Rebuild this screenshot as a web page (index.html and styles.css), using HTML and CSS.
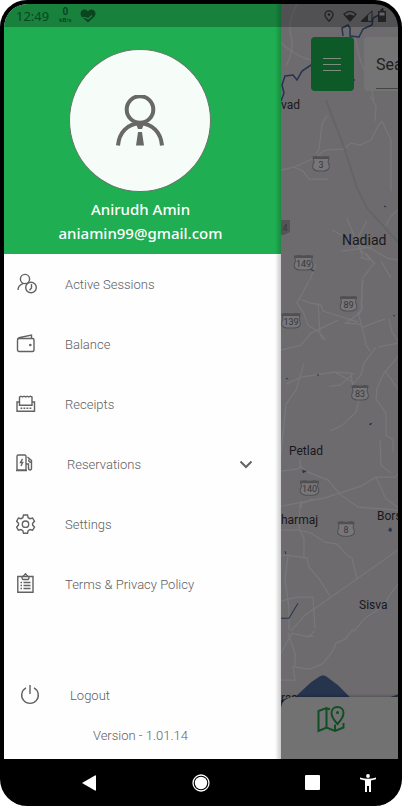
FILE: index.html
```html
<!DOCTYPE html>
<html lang="en">
<head>
<meta charset="utf-8">
<meta name="viewport" content="width=device-width, initial-scale=1">
<title>Account menu</title>
<link rel="stylesheet" href="styles.css">
</head>
<body>
<div class="phone">
  <div class="screen">
    <header class="status">
      <span class="time">12:49</span>
      <span class="speed"><b>0</b><small>kB/s</small></span>
      <svg class="heart" width="16" height="14" viewBox="0 0 16 14"><path d="M8 13.500 1.500 7.500C-1 4 1.500.5 4.500.5 6.200.5 7.400 1.300 8 2.500 8.600 1.300 9.800.5 11.500.5c3 0 5.500 3.500 3 7z" fill="currentColor"/><path d="M3 8.500h3l2 1.500 4-3.500" fill="none" stroke="#188440" stroke-width="1.200"/></svg>
      <span class="signals">
        <svg width="10" height="12" viewBox="0 0 10 12"><path d="M5 .8C2.700.8 1 2.400 1 4.600 1 7.200 5 11.200 5 11.200S9 7.200 9 4.600C9 2.400 7.300.8 5 .8z" fill="none" stroke="currentColor" stroke-width="1.300"/><circle cx="5" cy="4.600" r="1.300" fill="currentColor"/></svg>
        <svg class="wifi" width="14" height="12" viewBox="0 0 14 12"><path d="M1 4.200Q7-1.500 13 4.200L7 11z" fill="none" stroke="currentColor" stroke-width="1.200"/><path d="M3 6q4-3 8 0L7 11z" fill="currentColor"/></svg>
        <svg width="13" height="12" viewBox="0 0 13 12"><path d="M1 11.400H12V.9z" fill="none" stroke="currentColor"/><path d="M1 11.400H8V4.600z" fill="currentColor"/></svg>
        <svg class="battery" width="8" height="13" viewBox="0 0 8 13"><path d="M2.500 0h3v2H8v11H0V2h2.500z" fill="currentColor"/><path d="M1.500 3.500h5v3h-5z" fill="#656466"/></svg>
      </span>
    </header>

    <aside class="drawer">
      <div class="profile">
        <div class="avatar">
          <svg width="50" height="52" viewBox="0 0 50 52" fill="none" stroke="#686868" stroke-width="4"><circle cx="25" cy="14.500" r="13.300"/><path d="M3 50.500C4 38 12 28.500 25 28.500S46 38 47 50.500"/><path d="M21 29h8l-2 5h-4zM23 37h4l2 13.500h-8z" fill="#686868" stroke="none"/></svg>
        </div>
        <p>Anirudh Amin</p>
        <p>aniamin99@gmail.com</p>
      </div>
      <nav class="menu">
        <a href="#sessions"><svg width="22" height="22" viewBox="0 0 22 22"><circle cx="9" cy="6" r="4.600"/><path d="M2 17C2 13.500 4 11.600 7 10.600"/><circle cx="15" cy="14.500" r="5.300"/><path d="M15.500 11v4l-2 2.200"/></svg><span>Active Sessions</span></a>
        <a href="#balance"><svg width="22" height="22" viewBox="0 0 22 22"><rect x="1.500" y="5.500" width="16.500" height="13" rx="1.500"/><path d="M2 6.500Q1.500 5 4 4.500L15.500 2v3.500"/><circle cx="14.300" cy="12" r=".6"/></svg><span>Balance</span></a>
        <a href="#receipts"><svg width="22" height="22" viewBox="0 0 22 22"><path d="M4 9H1v9.300h17.500V9H16M3.500 3.500v8.700h12.500V3.500"/><path d="M3.500 4l1.500-.8 1.500.8L8 3.200l1.700.8 1.500-.8 1.500.8 1.500-.8 1.800.8"/><path d="M4.500 15.200H15.500" stroke-dasharray="1.800 1.200"/></svg><span>Receipts</span></a>
        <button type="button" aria-expanded="false"><svg width="22" height="22" viewBox="0 0 22 22"><path d="M1 3.300Q1 2 2.300 2h6.400Q10 2 10 3.300V17H1zM0 17.500H11M6.500 5.800 4.500 9.500h2.200L5 13M11.500 4l4 3.500V15q0 2-1.500 2t-1.500-2v-4H10.500M13 6.500q-1 2.500 2.500 3"/></svg><span class="label">Reservations</span><svg class="chevron" width="14" height="9" viewBox="0 0 14 9"><path d="M1.500 1.500 7 7l5.500-5.500"/></svg></button>
        <a href="#settings"><svg width="22" height="22" viewBox="0 0 22 22"><path d="M7.500 2h4l.7 2.700 1.800 1L16.600 5l1.900 3.300-1.900 2v1.800l1.900 2-1.900 3.200-2.600-.7-1.800 1-.7 2.600h-4l-.7-2.600-1.800-1-2.600.7L.6 14.100l1.900-2v-1.800l-1.900-2L2.400 5l2.600.7 1.800-1z"/><circle cx="9.500" cy="11.200" r="3.200"/></svg><span>Settings</span></a>
        <a href="#terms"><svg width="22" height="22" viewBox="0 0 22 22"><path d="M1.800 3.500H17v15.700H1.800z"/><path d="M6 3.500q0 3 1 3h5q1 0 1-3M7 3l1.200-.7L9.500.8l1.200 1.500L12 3"/><path d="M4.500 9.500H6m1.500 0H14.500M4.500 12.500H6m1.500 0H14.500M4.500 15.500H6m1.500 0H14.500"/></svg><span>Terms &amp; Privacy Policy</span></a>
      </nav>
      <div class="foot">
        <button type="button"><svg width="20" height="20" viewBox="0 0 20 20"><path d="M6 2.800a8.300 8.300 0 1 0 8 0M10 0v9"/></svg><span>Logout</span></button>
        <p>Version - 1.01.14</p>
      </div>
    </aside>

    <main class="map">
      <svg class="tiles" viewBox="281 4 117 755" preserveAspectRatio="xMinYMin slice" role="img" aria-label="Map of Nadiad, Petlad and Sisva">
        <g class="roads">
          <path d="M297 4Q287 24 291 36T286 66M355 36Q359 60 364 70T374 100M281 43Q300 60 318 61"/>
          <path d="M327 116l-5 8-3 25-3 5M281 170l13-3 21-9 10-8 18-1 8-6 9 2 11-5 7-14 4-5 9 19v51M375 121l1-15-6-10M294 167l9 4 6 8h19"/>
          <path d="M332 230l9 5 15 10 14 3 17 10 11 2M347 219l12 28 4 10M367 221l-14 26M341 251l30-4 10-10M360 249l14 14-12 16M386 225l5-9 8-7M363 280l-2 24 1 6-4 5M381 261l10 17M310 280l6-16M366 253l9 11M360 257l10 3"/>
          <path d="M309 281l-12 22 6 9 5 13 11 7 4 8M302 300l9 3 10 2 2 6 35 11M318 303l2 30 6 7M281 350l20-5 10-12 27-13M362 281v27l-4 6-12 9M358 312l7 27 1 6 4 6M344 323l18 1M363 327l10-4 12-4M389 319l3 13 7 10M378 347l20-4M376 347l-12 16-3 12-7 8-19-11M281 454l5-50 10-14 8-27M286 384l15-7 33-5 17 1 2 15M354 373l-14 12-11 1M399 355l-15 18-7 15-1 11 10 14 0 22 7 5 0 12M386 372l12 17M359 400l-3 12-15 14-11 5M281 506l43-8 37-12 15-9h19l8-8 12-17M376 477l10 22 13 9M380 440l1 25 10 8"/>
          <path d="M300 459v7l8 6 20 8 12 14 18 13 40 3M281 471l16-2 5-3M281 530l18 0 12 3 14 9 12 2 10 11 5 3 5 21M300 501l2 7M313 499l-13 5-1 25 5 9 0 19M281 555l6 0 20 3 2 9 11 13 10 16M288 556l-3 22 4 30 0 22M399 549l-71 50-23 16-14 16M281 601l15-4 17 0 2 31M398 584l-7 9-8 13-18 12-12 14"/>
          <path d="M281 653l11-20 17 4 5-6M288 633l7 20 0 14 15 2 12-5 10-12 4-9 9-4 8-10M293 666l2 14-14 0M304 636l10 0"/>
        </g>
        <path class="highway" d="M326 100l18 47 13 41 10 20 31 34"/>
        <path class="water" d="M281 101l3-8-2-8 3-9 8-1 4 5 5-9 9-6 12-5M354 81v-2M343 36l-1-8 6-3 2 3v8l9 1 4-8 9-4 1-7 6-3 4-7"/>
        <path class="lake" d="M295 697l16-15 9-6 3-1 3 1 12 9 12 12zM390 697l8-3v3zM281 700l9-3v12h-9z"/>
        <path class="pond" d="M302 470l5 1-4 2zM370 423l2 0-1 2-2 0zM390 527l2 2-1 3-3-2z"/>
        <path class="stream" d="M310 269l2 1 2 1M384 206l2 1M393 315l2 1M286 378l2 1M285 551l1 3M317 375l2 0M281 618h8l9-15"/>
        <g class="shields">
          <g transform="translate(321 164)"><path d="M-8-7h16l-1 5q4 8-4 9H-3q-8-1-4-9z"/><path class="cap" d="M-8-7l3-1 5 1 5-1 3 1v2H-8z"/><text y="4">3</text></g>
          <g transform="translate(303.500 263)"><path d="M-9-7H9l-1 5q4 8-4 9H-4q-8-1-4-9z"/><path class="cap" d="M-9-7l4-1 5 1 5-1 4 1v2H-9z"/><text y="4">149</text></g>
          <g transform="translate(348.500 304)"><path d="M-8-7h16l-1 5q4 8-4 9H-3q-8-1-4-9z"/><path class="cap" d="M-8-7l3-1 5 1 5-1 3 1v2H-8z"/><text y="4">89</text></g>
          <g transform="translate(291 321)"><path d="M-9-7H9l-1 5q4 8-4 9H-4q-8-1-4-9z"/><path class="cap" d="M-9-7l4-1 5 1 5-1 4 1v2H-9z"/><text y="4">139</text></g>
          <g transform="translate(360 393)"><path d="M-8-7h16l-1 5q4 8-4 9H-3q-8-1-4-9z"/><path class="cap" d="M-8-7l3-1 5 1 5-1 3 1v2H-8z"/><text y="4">83</text></g>
          <g transform="translate(309.500 488)"><path d="M-9-7H9l-1 5q4 8-4 9H-4q-8-1-4-9z"/><path class="cap" d="M-9-7l4-1 5 1 5-1 4 1v2H-9z"/><text y="4">140</text></g>
          <g transform="translate(346 529)"><path d="M-8-7h16l-1 5q4 8-4 9H-3q-8-1-4-9z"/><path class="cap" d="M-8-7l3-1 5 1 5-1 3 1v2H-8z"/><text y="4">8</text></g>
          <path class="tag" d="M281 220h9v12l-6 3h-3z"/><text x="285" y="231">4</text>
        </g>
        <g class="places">
          <text x="281" y="109">vad</text>
          <text class="city" x="342" y="245">Nadiad</text>
          <text x="289" y="455">Petlad</text>
          <text x="281" y="524">harmaj</text>
          <text x="377" y="520">Bors</text>
          <text x="359" y="609">Sisva</text>
          <text x="281" y="702">ras</text>
        </g>
      </svg>
      <div class="tools">
        <button type="button" class="burger" aria-label="Menu"><i></i><i></i><i></i></button>
        <label class="search"><input type="text" placeholder="Search" aria-label="Search"></label>
      </div>
      <div class="sheet">
        <button type="button" aria-label="Map view"><svg width="28" height="28" viewBox="0 0 28 28" fill="none" stroke="#104f25" stroke-width="2"><path d="M13 4.500 9.500 3 1.500 6V26L9.500 22.500 18 26 26.500 22.500V18M9.500 3V22.500M18 19.500V26"/><path d="M20.500 2C17 2 14.500 4.500 14.500 8 14.500 12.500 20.500 19 20.500 19S26.500 12.500 26.500 8C26.500 4.500 24 2 20.500 2z"/><circle cx="20.500" cy="7.500" r="1.500" fill="#104f25" stroke="none"/></svg></button>
      </div>
    </main>
  </div>

  <nav class="system">
    <div class="keys">
      <button type="button" aria-label="Back"><svg width="14" height="16" viewBox="0 0 14 16"><path d="M0 8 13 .5Q14 0 14 1V15q0 1-1 .5z" fill="#fff"/></svg></button>
      <button type="button" aria-label="Home"><svg width="18" height="18" viewBox="0 0 18 18"><circle cx="9" cy="9" r="8" fill="none" stroke="#fff" stroke-width="1.300"/><circle cx="9" cy="9" r="6.200" fill="#fff"/></svg></button>
      <button type="button" aria-label="Recent apps"><svg width="15" height="15" viewBox="0 0 15 15"><rect width="15" height="15" rx="1" fill="#fff"/></svg></button>
    </div>
    <button type="button" aria-label="Accessibility"><svg width="16" height="18" viewBox="0 0 16 18" fill="#fff"><circle cx="8" cy="2" r="1.900"/><path d="M0 3.500Q8 6 16 3.500V5.300L11 6.500V18H9V12H7v6H5V6.500L0 5.300z"/></svg></button>
  </nav>
</div>
</body>
</html>
```
FILE: styles.css
```css
* { box-sizing: border-box; }
body {
  margin: 0;
  background: #fff;
  font-family: Roboto, "Liberation Sans", sans-serif;
}
p { margin: 0; }
svg { display: block; flex: none; }
button {
  margin: 0;
  padding: 0;
  border: 0;
  background: none;
  font: inherit;
  color: inherit;
}
.phone {
  display: flex;
  flex-direction: column;
  min-height: 100vh;
  border: 4px solid #000;
  border-bottom: 0;
  border-radius: 27px;
  background: #000;
  overflow: hidden;
}
.screen {
  position: relative;
  display: flex;
  flex: 1;
  border-radius: 23px 23px 0 0;
  overflow: hidden;
}

.status {
  position: absolute;
  inset: 0 0 auto;
  z-index: 3;
  display: flex;
  align-items: center;
  height: 23px;
  padding: 0 12px;
  background: rgba(0, 0, 0, 0.25);
  color: #0b4520;
}
.time { font-size: 13px; font-family: "Noto Sans", sans-serif; line-height: 20px; }
.speed {
  display: flex;
  flex-direction: column;
  align-items: center;
  margin-left: 10px;
  line-height: 8px;
}
.speed b { font-size: 10px; }
.speed small { font-size: 6px; font-weight: 700; }
.heart { margin-left: 8px; }
.signals {
  display: flex;
  align-items: center;
  gap: 3px;
  margin-left: auto;
  color: #222123;
}
.wifi { margin-left: 6px; }
.battery { margin-left: 2px; }

.drawer {
  position: relative;
  z-index: 1;
  display: flex;
  flex: 0 0 70.3%;
  flex-direction: column;
  background: #fefefe;
  color: #606060;
  font-size: 13px;
  font-weight: 300;
}
.drawer::after {
  content: "";
  position: absolute;
  inset: 0 0 0 auto;
  width: 6px;
  background: linear-gradient(90deg, transparent, rgba(0, 0, 0, 0.2));
}
.profile {
  display: flex;
  flex-direction: column;
  align-items: center;
  padding: 45px 8px 9px 4px;
  background: #20ae52;
  color: #fff;
  font-family: "Noto Sans", sans-serif;
  font-size: 15px;
  font-weight: 500;
  line-height: 24px;
}
.avatar {
  display: grid;
  place-items: center;
  width: 142px;
  height: 143px;
  margin-bottom: 5px;
  border: 1px solid #617966;
  border-radius: 50%;
  background: #f6fdf8;
}
.menu a, .menu button, .foot button {
  display: flex;
  align-items: center;
  gap: 27px;
  width: 100%;
  height: 60px;
  padding: 0 28px 0 12px;
  color: inherit;
  text-align: left;
  text-decoration: none;
}
.menu svg, .foot svg {
  fill: none;
  stroke: #626262;
  stroke-width: 1.4;
}
.label { padding-left: 2px; }
.menu .chevron { margin-left: auto; stroke-width: 2; }
.foot { margin-top: auto; padding-bottom: 12px; }
.foot button { gap: 30px; padding-left: 16px; }
.foot p { padding-right: 4px; line-height: 22px; text-align: center; }

.map {
  position: relative;
  flex: 1;
  min-width: 0;
  background: #6d6b6e;
  overflow: hidden;
}
.tiles {
  position: absolute;
  inset: 0;
  width: 100%;
  height: 100%;
}
.roads { fill: none; stroke: #787779; stroke-width: 1.2; }
.highway { fill: none; stroke: #656466; stroke-width: 2; }
.water { fill: none; stroke: #26334f; stroke-width: 1.5; }
.lake { fill: #26344d; }
.pond { fill: #26344d; }
.stream { fill: none; stroke: #26344d; }
.shields { fill: #777678; stroke: #505052; }
.shields text {
  fill: #38383a;
  stroke: none;
  font-size: 9px;
  text-anchor: middle;
}
.shields .cap { fill: #505052; stroke: none; }
.shields .tag { fill: #555557; stroke: none; }
.places { fill: #18181c; font-size: 12px; }
.city { font-size: 14px; }
.tools {
  position: absolute;
  inset: 33px 0 auto 30px;
  display: flex;
  gap: 10px;
}
.burger {
  display: flex;
  flex: none;
  flex-direction: column;
  align-items: center;
  justify-content: center;
  gap: 5px;
  width: 43px;
  height: 54px;
  border-radius: 4px;
  background: #0d5927;
}
.burger i { width: 18px; height: 1px; background: #7b8e80; }
.search {
  flex: none;
  width: 240px;
  height: 54px;
  padding: 4px 12px 2px;
  border-radius: 4px;
  background: #747474;
}
.search input {
  width: 100%;
  height: 48px;
  padding: 0;
  border: 0;
  border-bottom: 1px solid #444;
  background: none;
  font: 16px Roboto, sans-serif;
  color: #202020;
}
.search input::placeholder { color: #202020; opacity: 1; }
.sheet {
  position: absolute;
  inset: auto 0 0;
  display: flex;
  padding: 8px 36px 26px;
  border-radius: 12px 0 0 0;
  background: #727272;
  box-shadow: 0 -1px 3px rgba(0, 0, 0, 0.25);
}

.system {
  display: flex;
  align-items: center;
  gap: 40px;
  height: 47px;
  padding: 0 22px 0 78px;
}
.keys {
  display: flex;
  flex: 1;
  align-items: center;
  justify-content: space-between;
}
```
